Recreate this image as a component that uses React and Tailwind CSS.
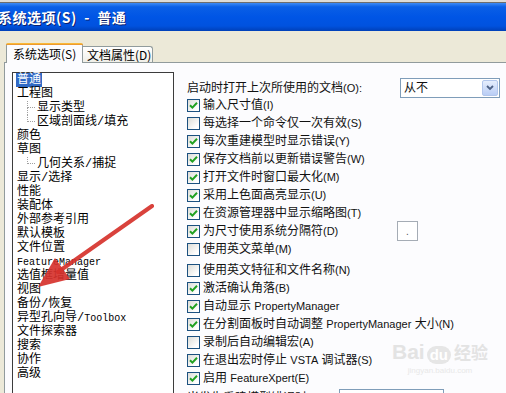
import React from "react";

const Lt = ({ children }) => <span className="text-[11px]">{children}</span>;
const Mono = ({ children }) => (
  <span className="text-[10px] font-['Liberation_Mono',monospace]">{children}</span>
);

function CheckBox({ checked }) {
  return (
    <span className="w-[13px] h-[13px] shrink-0 border border-[#1c5180] bg-[linear-gradient(135deg,#dcdcd7_0%,#ffffff_80%)] flex items-center justify-center">
      {checked && (
        <svg width="9" height="9" viewBox="0 0 9 9">
          <path d="M1 4.2 L3.4 6.6 L8 1.8" stroke="#21a121" strokeWidth="2" fill="none" />
        </svg>
      )}
    </span>
  );
}

function Row({ checked, children, extra, className = "" }) {
  return (
    <div className={"h-[18px] flex items-center " + className}>
      <CheckBox checked={checked} />
      <span className="ml-[3px] whitespace-nowrap">{children}</span>
      {extra}
    </div>
  );
}

function TreeItem({ children, selected }) {
  return (
    <div className="h-[14px] flex items-center">
      <span className={selected ? "bg-[#316ac5] text-white px-px -ml-px leading-[14px]" : "leading-[14px]"}>
        {children}
      </span>
    </div>
  );
}

function TreeChild({ children, last }) {
  return (
    <div className="h-[14px] flex items-center relative">
      <div className="w-[20px] h-[14px] shrink-0 flex flex-col">
        <div className="ml-[10px] w-[8px] h-[7px] border-l border-b border-dotted border-[#a0a0a0]" />
        {!last && <div className="ml-[10px] h-[7px] border-l border-dotted border-[#a0a0a0]" />}
      </div>
      <span className="leading-[14px] whitespace-nowrap">{children}</span>
    </div>
  );
}

export default function App() {
  return (
    <div className="w-[506px] h-[393px] overflow-hidden relative bg-[#ece9d8] font-['Liberation_Sans','Noto_Sans_CJK_SC',sans-serif]">
      {/* top strip */}
      <div className="h-[3px] bg-[#dedcd6] border-b border-[#6d6d6d]" />
      {/* title bar */}
      <div className="h-[28px] bg-[linear-gradient(180deg,#3d8bf5_0%,#0a5fe6_14%,#0055e5_50%,#0052df_82%,#0040b8_100%)] flex items-center">
        <span className="-ml-[2px] text-white font-bold text-[14px] tracking-[0.5px] [text-shadow:1px_1px_0_#0a1e6e] font-['Noto_Sans_CJK_SC',sans-serif] whitespace-nowrap">
          系统选项(S)&nbsp; -&nbsp; 普通
        </span>
      </div>
      {/* tab strip */}
      <div className="h-[31px] flex items-end pl-[6px] text-[12px] text-black font-['Noto_Sans_CJK_SC',sans-serif]">
        <div className="relative z-10 -mb-px h-[20px] w-[77px] bg-[#fcfcfe] border-x border-[#919b9c] rounded-t-[3px] flex flex-col">
          <div className="h-[3px] -mx-px rounded-t-[3px] bg-[linear-gradient(180deg,#ffc83c,#e68b2c)]" />
          <div className="flex-1 flex items-center pl-[6px]">系统选项(S)</div>
        </div>
        <div className="h-[16px] w-[70px] bg-[linear-gradient(180deg,#ffffff,#f0efe8)] border-t border-r border-[#919b9c] rounded-tr-[3px] flex items-center pl-[4px]">
          文档属性(D)
        </div>
      </div>
      {/* panel */}
      <div className="ml-[4px] h-[400px] bg-[#fcfcfe] border-t border-l border-[#919b9c] flex">
        {/* tree */}
        <div className="ml-[7px] mt-[9px] w-[162px] h-[400px] border border-[#3c3c3c] bg-white pl-[4px] pt-0 text-[12px] text-black font-['Liberation_Mono','Noto_Sans_CJK_SC',monospace]">
          <TreeItem selected>普通</TreeItem>
          <TreeItem>工程图</TreeItem>
          <TreeChild>显示类型</TreeChild>
          <TreeChild last>区域剖面线/填充</TreeChild>
          <TreeItem>颜色</TreeItem>
          <TreeItem>草图</TreeItem>
          <TreeChild last>几何关系/捕捉</TreeChild>
          <TreeItem>显示/选择</TreeItem>
          <TreeItem>性能</TreeItem>
          <TreeItem>装配体</TreeItem>
          <TreeItem>外部参考引用</TreeItem>
          <TreeItem>默认模板</TreeItem>
          <TreeItem>文件位置</TreeItem>
          <TreeItem><Mono>FeatureManager</Mono></TreeItem>
          <TreeItem>选值框增量值</TreeItem>
          <TreeItem>视图</TreeItem>
          <TreeItem>备份/恢复</TreeItem>
          <TreeItem>异型孔向导/<Mono>Toolbox</Mono></TreeItem>
          <TreeItem>文件探索器</TreeItem>
          <TreeItem>搜索</TreeItem>
          <TreeItem>协作</TreeItem>
          <TreeItem>高级</TreeItem>
        </div>
        {/* options */}
        <div className="flex-1 ml-[13px] pt-[17px] text-[12px] text-[#111] flex flex-col">
          <div className="h-[16px] flex items-center">
            <span className="whitespace-nowrap">启动时打开上次所使用的文档<Lt>(O):</Lt></span>
            <div className="ml-auto mr-[6px] w-[100px] h-[20px] shrink-0 border border-[#7f9db9] bg-white flex items-center">
              <span className="pl-[3px] flex-1">从不</span>
              <span className="w-[16px] h-[16px] mr-px bg-[linear-gradient(180deg,#e6eefc,#b9cdf5)] border border-[#b2c6ec] rounded-[2px] flex items-center justify-center">
                <svg width="8" height="6" viewBox="0 0 8 6">
                  <path d="M1 1 L4 4 L7 1" stroke="#4d6185" strokeWidth="1.8" fill="none" />
                </svg>
              </span>
            </div>
          </div>
          <Row checked>输入尺寸值<Lt>(I)</Lt></Row>
          <Row>每选择一个命令仅一次有效<Lt>(S)</Lt></Row>
          <Row checked>每次重建模型时显示错误<Lt>(Y)</Lt></Row>
          <Row checked>保存文档前以更新错误警告<Lt>(W)</Lt></Row>
          <Row checked>打开文件时窗口最大化<Lt>(M)</Lt></Row>
          <Row checked>采用上色面高亮显示<Lt>(U)</Lt></Row>
          <Row checked>在资源管理器中显示缩略图<Lt>(T)</Lt></Row>
          <div className="h-[18px] flex items-center">
            <CheckBox checked />
            <span className="ml-[3px] w-[194px] whitespace-nowrap">为尺寸使用系统分隔符<Lt>(D)</Lt></span>
            <span className="w-[21px] h-[20px] shrink-0 border border-[#a5acb5] bg-white flex items-center justify-center text-[10px] text-[#555]">.</span>
          </div>
          <Row>使用英文菜单<Lt>(M)</Lt></Row>
          <Row className="mt-[3px]">使用英文特征和文件名称<Lt>(N)</Lt></Row>
          <Row checked>激活确认角落<Lt>(B)</Lt></Row>
          <Row checked>自动显示 <Lt>PropertyManager</Lt></Row>
          <Row checked>在分割面板时自动调整 <Lt>PropertyManager</Lt> 大小<Lt>(N)</Lt></Row>
          <Row>录制后自动编辑宏<Lt>(A)</Lt></Row>
          <Row checked>在退出宏时停止 <Lt>VSTA</Lt> 调试器<Lt>(S)</Lt></Row>
          <Row checked>启用 <Lt>FeatureXpert(E)</Lt></Row>
          <div className="h-[18px] flex items-start">
            <span className="w-[152px] whitespace-nowrap pt-[2px]">当发生重建模型错误时:</span>
            <span className="mt-[2px] w-[105px] h-[20px] border border-[#7f9db9] bg-white" />
          </div>
        </div>
      </div>

      {/* Baidu watermark */}
      <div className="absolute left-[392px] top-[340px] flex flex-col items-center text-[#e3e3e3] pointer-events-none">
        <div className="flex items-end font-bold text-[21px] leading-[24px] font-['Liberation_Sans',sans-serif]">
          <span>Bai</span>
          <span className="ml-[2px] px-[3px] rounded-full bg-[#e6e6e6] text-white text-[15px] leading-[18px]">du</span>
          <span className="ml-[3px] text-[17px] font-['Noto_Sans_CJK_SC',sans-serif]">经验</span>
        </div>
        <div className="text-[8px] leading-[10px] mt-[2px] text-[#e8e8e8]">jingyan.baidu.com</div>
      </div>

      {/* red arrow */}
      <svg className="absolute left-0 top-0 pointer-events-none" width="506" height="393" viewBox="0 0 506 393">
        <line x1="152" y1="206" x2="58" y2="272" stroke="#d6322c" strokeWidth="4" strokeLinecap="round" opacity="0.92" />
        <polygon points="38,287 55,258 70,279" fill="#d6322c" opacity="0.92" />
      </svg>
    </div>
  );
}
